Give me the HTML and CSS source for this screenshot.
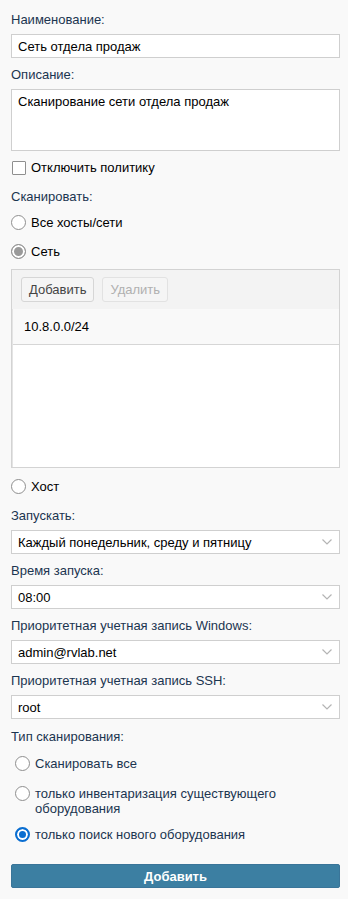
FILE: index.html
```html
<!DOCTYPE html>
<html lang="ru">

<head>
  <meta charset="UTF-8">
  <meta name="viewport" content="width=device-width, initial-scale=1.0">
  <title>Политика сканирования</title>

  <link rel="stylesheet" href="styles.css">

</head>

<body>

  <form class="policyForm">

    <div class="field first">
      <label class="fieldLabel">Наименование:</label>
      <input class="textInput" type="text" value="Сеть отдела продаж">
    </div>

    <div class="field">
      <label class="fieldLabel">Описание:</label>
      <textarea class="textArea">Сканирование сети отдела продаж</textarea>
    </div>

    <label class="checkRow">
      <input class="checkBox" type="checkbox">
      <span>Отключить политику</span>
    </label>

    <div class="fieldLabel scanLabel">Сканировать:</div>

    <label class="radioRow">
      <input class="radio" type="radio" name="scan">
      <span>Все хосты/сети</span>
    </label>

    <label class="radioRow">
      <input class="radio gray" type="radio" name="scan" checked>
      <span>Сеть</span>
    </label>

    <!-- список сетей -->
    <div class="netGrid">
      <div class="gridTools">
        <button class="toolBtn" type="button">Добавить</button>
        <button class="toolBtn disabled" type="button">Удалить</button>
      </div>
      <div class="gridBody">
        <div class="gridRow">10.8.0.0/24</div>
      </div>
    </div>

    <label class="radioRow hostRow">
      <input class="radio" type="radio" name="scan">
      <span>Хост</span>
    </label>

    <div class="field">
      <label class="fieldLabel">Запускать:</label>
      <div class="selectBox">
        <span>Каждый понедельник, среду и пятницу</span>
        <svg class="chevron" width="10" height="6" viewBox="0 0 10 6"><path d="M0.5 0.5 L5 5 L9.5 0.5" fill="none" stroke="#b4b4b4" stroke-width="1.2"/></svg>
      </div>
    </div>

    <div class="field">
      <label class="fieldLabel">Время запуска:</label>
      <div class="selectBox">
        <span>08:00</span>
        <svg class="chevron" width="10" height="6" viewBox="0 0 10 6"><path d="M0.5 0.5 L5 5 L9.5 0.5" fill="none" stroke="#b4b4b4" stroke-width="1.2"/></svg>
      </div>
    </div>

    <div class="field">
      <label class="fieldLabel">Приоритетная учетная запись Windows:</label>
      <div class="selectBox">
        <span>admin@rvlab.net</span>
        <svg class="chevron" width="10" height="6" viewBox="0 0 10 6"><path d="M0.5 0.5 L5 5 L9.5 0.5" fill="none" stroke="#b4b4b4" stroke-width="1.2"/></svg>
      </div>
    </div>

    <div class="field">
      <label class="fieldLabel">Приоритетная учетная запись SSH:</label>
      <div class="selectBox">
        <span>root</span>
        <svg class="chevron" width="10" height="6" viewBox="0 0 10 6"><path d="M0.5 0.5 L5 5 L9.5 0.5" fill="none" stroke="#b4b4b4" stroke-width="1.2"/></svg>
      </div>
    </div>

    <div class="fieldLabel typeLabel">Тип сканирования:</div>

    <div class="typeList">
      <label class="radioRow">
        <input class="radio" type="radio" name="type">
        <span>Сканировать все</span>
      </label>
      <label class="radioRow twoLines">
        <input class="radio" type="radio" name="type">
        <span>только инвентаризация существующего оборудования</span>
      </label>
      <label class="radioRow">
        <input class="radio blue" type="radio" name="type" checked>
        <span>только поиск нового оборудования</span>
      </label>
    </div>

    <button class="submitBtn" type="button">Добавить</button>

  </form>

</body>

</html>
```

FILE: styles.css
```css
body {
  margin: 0;
  background-color: #f9f9f9;
  font-family: "Liberation Sans", Arial, sans-serif;
  font-size: 13px;
  color: #1b3550;
}

.policyForm {
  width: 329px;
  padding: 12px 0 0 11px;
}

/* fields */
.field {
  display: flex;
  flex-direction: column;
  margin-top: 9px;
}

.field.first {
  margin-top: 0;
}

.fieldLabel {
  line-height: 16px;
  margin-bottom: 6px;
}

.textInput,
.textArea,
.selectBox {
  box-sizing: border-box;
  width: 100%;
  margin: 0;
  border: 1px solid #cfcfcf;
  background-color: white;
  font-family: inherit;
  font-size: 13px;
  color: black;
}

.textInput {
  height: 24px;
  padding: 0 6px;
}

.textArea {
  display: block;
  height: 62px;
  padding: 4px 6px;
  line-height: 16px;
  resize: none;
}

.selectBox {
  display: flex;
  align-items: center;
  justify-content: space-between;
  height: 24px;
  padding: 0 7px 0 6px;
}

.chevron {
  display: block;
}

/* check & radio */
.checkRow,
.radioRow {
  display: flex;
  align-items: flex-start;
  gap: 5px;
  line-height: 16px;
  color: black;
}

.checkRow {
  margin-top: 9px;
}

.checkBox {
  appearance: none;
  width: 14px;
  height: 14px;
  margin: 1px 0 0 1px;
  border: 1px solid #8f8f8f;
  border-radius: 1px;
  background-color: white;
}

.scanLabel {
  margin-top: 13px;
  margin-bottom: 10px;
}

.radioRow {
  margin-bottom: 13px;
}

.radio {
  appearance: none;
  flex-shrink: 0;
  width: 15px;
  height: 15px;
  margin: 0;
  border: 1px solid #8f8f8f;
  border-radius: 50%;
  background-color: white;
}

.radio.gray:checked {
  background-color: #9a9a9a;
  box-shadow: inset 0 0 0 2px white;
}

.radio.blue:checked {
  border: 2px solid #0a6ed1;
  background-color: #0a6ed1;
  box-shadow: inset 0 0 0 2px white;
}

/* network grid */
.netGrid {
  box-sizing: border-box;
  height: 199px;
  margin-top: -4px;
  border: 1px solid #d3d3d3;
  background-color: white;
  display: flex;
  flex-direction: column;
}

.gridTools {
  display: flex;
  gap: 8px;
  height: 39px;
  padding: 7px 0 0 9px;
  box-sizing: border-box;
  background-color: #f3f3f3;
}

.toolBtn {
  height: 25px;
  padding: 0 7px;
  border: 1px solid #d6d6d6;
  border-radius: 3px;
  background-color: #f5f5f5;
  font-family: inherit;
  font-size: 13px;
  color: #444;
}

.toolBtn.disabled {
  border-color: #e2e2e2;
  color: #b0b0b0;
}

.gridBody {
  flex: 1;
  border-left: 1px solid #e4e4e4;
}

.gridRow {
  height: 35px;
  line-height: 35px;
  padding-left: 11px;
  border-bottom: 1px solid #d6d6d6;
  background-color: #f9f9f9;
  color: black;
}

.hostRow {
  margin-top: 11px;
  margin-bottom: 13px;
}

/* scan type */
.typeLabel {
  margin-top: 10px;
  margin-bottom: 11px;
}

.typeList {
  padding-left: 4px;
}

.typeList .radioRow {
  margin-bottom: 14px;
  color: #1b3550;
}

.typeList .twoLines {
  line-height: 15px;
  margin-bottom: 11px;
}

.submitBtn {
  display: block;
  width: 100%;
  height: 24px;
  margin-top: 21px;
  border: 1px solid #3a7599;
  border-radius: 2px;
  background-color: #3c7fa2;
  font-family: inherit;
  font-size: 13px;
  font-weight: bold;
  color: white;
}
```
